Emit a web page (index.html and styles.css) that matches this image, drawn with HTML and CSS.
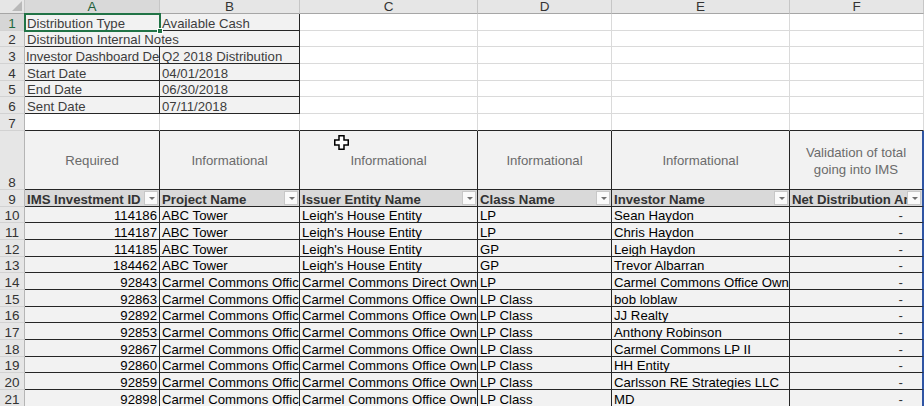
FILE: index.html
```html
<!DOCTYPE html>
<html>
<head>
<meta charset="utf-8">
<link rel="stylesheet" href="styles.css">
</head>
<body>
<div class="sheet">
  <div class="row top">
    <div class="c corner"><svg class="tri" width="10" height="10" viewBox="0 0 10 10"><polygon points="0,10 10,0 10,10" fill="#b9b9b9"/></svg></div>
    <div class="c ch selc">A</div>
    <div class="c ch">B</div>
    <div class="c ch">C</div>
    <div class="c ch">D</div>
    <div class="c ch">E</div>
    <div class="c ch">F</div>
  </div>

  <div class="row">
    <div class="c rh selr">1</div>
    <div class="c f t1">Distribution Type</div>
    <div class="c f t1">Available Cash</div>
    <div class="c"></div><div class="c"></div><div class="c"></div><div class="c"></div>
  </div>
  <div class="row s">
    <div class="c rh">2</div>
    <div class="c f t1 span2">Distribution Internal Notes</div>
    <div class="c"></div><div class="c"></div><div class="c"></div><div class="c"></div>
  </div>
  <div class="row">
    <div class="c rh">3</div>
    <div class="c f t1 tight">Investor Dashboard De</div>
    <div class="c f t1">Q2 2018 Distribution</div>
    <div class="c"></div><div class="c"></div><div class="c"></div><div class="c"></div>
  </div>
  <div class="row">
    <div class="c rh">4</div>
    <div class="c f t1">Start Date</div>
    <div class="c f t1">04/01/2018</div>
    <div class="c"></div><div class="c"></div><div class="c"></div><div class="c"></div>
  </div>
  <div class="row s">
    <div class="c rh">5</div>
    <div class="c f t1">End Date</div>
    <div class="c f t1">06/30/2018</div>
    <div class="c"></div><div class="c"></div><div class="c"></div><div class="c"></div>
  </div>
  <div class="row">
    <div class="c rh">6</div>
    <div class="c f t1">Sent Date</div>
    <div class="c f t1">07/11/2018</div>
    <div class="c"></div><div class="c"></div><div class="c"></div><div class="c"></div>
  </div>
  <div class="row">
    <div class="c rh">7</div>
    <div class="c bb"></div><div class="c bb"></div><div class="c bb"></div><div class="c bb"></div><div class="c bb"></div><div class="c bb"></div>
  </div>

  <div class="row tall">
    <div class="c rh">8</div>
    <div class="c f lab">Required</div>
    <div class="c f lab">Informational</div>
    <div class="c f lab">Informational</div>
    <div class="c f lab">Informational</div>
    <div class="c f lab">Informational</div>
    <div class="c f lab blue">Validation of total<br>going into IMS</div>
  </div>

  <div class="row">
    <div class="c rh">9</div>
    <div class="c f hd">IMS Investment ID<span class="fb"></span></div>
    <div class="c f hd">Project Name<span class="fb"></span></div>
    <div class="c f hd">Issuer Entity Name<span class="fb"></span></div>
    <div class="c f hd">Class Name<span class="fb"></span></div>
    <div class="c f hd">Investor Name<span class="fb"></span></div>
    <div class="c f hd blue">Net Distribution An<span class="fb"></span></div>
  </div>

  <div class="row s">
    <div class="c rh">10</div>
    <div class="c f r">114186</div>
    <div class="c f">ABC Tower</div>
    <div class="c f">Leigh's House Entity</div>
    <div class="c f">LP</div>
    <div class="c f">Sean Haydon</div>
    <div class="c f dash blue">-</div>
  </div>
  <div class="row">
    <div class="c rh">11</div>
    <div class="c f r">114187</div>
    <div class="c f">ABC Tower</div>
    <div class="c f">Leigh's House Entity</div>
    <div class="c f">LP</div>
    <div class="c f">Chris Haydon</div>
    <div class="c f dash blue">-</div>
  </div>
  <div class="row">
    <div class="c rh">12</div>
    <div class="c f r">114185</div>
    <div class="c f">ABC Tower</div>
    <div class="c f">Leigh's House Entity</div>
    <div class="c f">GP</div>
    <div class="c f">Leigh Haydon</div>
    <div class="c f dash blue">-</div>
  </div>
  <div class="row s">
    <div class="c rh">13</div>
    <div class="c f r">184462</div>
    <div class="c f">ABC Tower</div>
    <div class="c f">Leigh's House Entity</div>
    <div class="c f">GP</div>
    <div class="c f">Trevor Albarran</div>
    <div class="c f dash blue">-</div>
  </div>
  <div class="row">
    <div class="c rh">14</div>
    <div class="c f r">92843</div>
    <div class="c f">Carmel Commons Offic</div>
    <div class="c f">Carmel Commons Direct Own</div>
    <div class="c f">LP</div>
    <div class="c f">Carmel Commons Office Own</div>
    <div class="c f dash blue">-</div>
  </div>
  <div class="row">
    <div class="c rh">15</div>
    <div class="c f r">92863</div>
    <div class="c f">Carmel Commons Offic</div>
    <div class="c f">Carmel Commons Office Own</div>
    <div class="c f">LP Class</div>
    <div class="c f">bob loblaw</div>
    <div class="c f dash blue">-</div>
  </div>
  <div class="row s">
    <div class="c rh">16</div>
    <div class="c f r">92892</div>
    <div class="c f">Carmel Commons Offic</div>
    <div class="c f">Carmel Commons Office Own</div>
    <div class="c f">LP Class</div>
    <div class="c f">JJ Realty</div>
    <div class="c f dash blue">-</div>
  </div>
  <div class="row">
    <div class="c rh">17</div>
    <div class="c f r">92853</div>
    <div class="c f">Carmel Commons Offic</div>
    <div class="c f">Carmel Commons Office Own</div>
    <div class="c f">LP Class</div>
    <div class="c f">Anthony Robinson</div>
    <div class="c f dash blue">-</div>
  </div>
  <div class="row">
    <div class="c rh">18</div>
    <div class="c f r">92867</div>
    <div class="c f">Carmel Commons Offic</div>
    <div class="c f">Carmel Commons Office Own</div>
    <div class="c f">LP Class</div>
    <div class="c f">Carmel Commons LP II</div>
    <div class="c f dash blue">-</div>
  </div>
  <div class="row s">
    <div class="c rh">19</div>
    <div class="c f r">92860</div>
    <div class="c f">Carmel Commons Offic</div>
    <div class="c f">Carmel Commons Office Own</div>
    <div class="c f">LP Class</div>
    <div class="c f">HH Entity</div>
    <div class="c f dash blue">-</div>
  </div>
  <div class="row">
    <div class="c rh">20</div>
    <div class="c f r">92859</div>
    <div class="c f">Carmel Commons Offic</div>
    <div class="c f">Carmel Commons Office Own</div>
    <div class="c f">LP Class</div>
    <div class="c f">Carlsson RE Strategies LLC</div>
    <div class="c f dash blue">-</div>
  </div>
  <div class="row">
    <div class="c rh">21</div>
    <div class="c f r">92898</div>
    <div class="c f">Carmel Commons Offic</div>
    <div class="c f">Carmel Commons Office Own</div>
    <div class="c f">LP Class</div>
    <div class="c f">MD</div>
    <div class="c f dash blue">-</div>
  </div>

  <div class="selbox"><span class="handle"></span></div>
  <svg class="cursor" width="15" height="15" viewBox="0 0 15 15"><polygon points="5,0.75 10,0.75 10,5 14.25,5 14.25,10 10,10 10,14.25 5,14.25 5,10 0.75,10 0.75,5 5,5" fill="#fff" stroke="#000" stroke-width="1.5"/></svg>
</div>
</body>
</html>
```

FILE: styles.css
```css
* { box-sizing: border-box; margin: 0; padding: 0; }
html, body { background: #fff; overflow: hidden; }
body {
  width: 924px;
  height: 406px;
  font-family: "Liberation Sans", Arial, sans-serif;
  font-size: 13.2px;
  color: #000;
}
.sheet {
  position: relative;
  display: flex;
  flex-direction: column;
}
.row {
  display: grid;
  grid-template-columns: 25px 135px 140px 178px 134px 178px 134px;
  height: 17px;
}
.row.s { height: 16px; }
.row.top { height: 14px; }
.row.tall { height: 59px; }

.c {
  position: relative;
  display: flex;
  align-items: flex-end;
  overflow: hidden;
  white-space: nowrap;
  padding: 0 2px;
  line-height: 13px;
  border-right: 1px solid #dadada;
  border-bottom: 1px solid #dadada;
}
.span2 { grid-column: span 2; }
.tight { letter-spacing: -0.12px; padding-left: 1px; }

.corner { background: #e6e6e6; border-right-color: #c6c6c6; border-bottom-color: #a6a6a6; }
.tri { position: absolute; right: 2px; bottom: 2px; }
.ch {
  background: #e6e6e6;
  border-right-color: #c6c6c6;
  border-bottom-color: #a6a6a6;
  justify-content: center;
  align-items: center;
  line-height: 13px;
  color: #333;
  font-size: 13.5px;
}
.selc { background: #d9d9d9; color: #1f5f3a; border-bottom-color: #7fa58d; }
.rh {
  background: #e6e6e6;
  border-right-color: #b5b5b5;
  border-bottom-color: #d2d2d2;
  justify-content: center;
  color: #333;
  padding: 0;
  font-size: 13.5px;
}
.selr { background: #d6d6d6; color: #1f6b40; }

.f { background: #f2f2f2; border-right-color: #262626; border-bottom-color: #262626; }
.t1 { color: #3d3d3d; }
.bb { border-bottom-color: #262626; }
.r { justify-content: flex-end; }
.lab {
  color: #6b6b6b;
  align-items: center;
  justify-content: center;
  text-align: center;
  white-space: normal;
  line-height: 17px;
  padding-top: 1px;
}
.hd { background: #d9d9d9; font-weight: bold; color: #333; }
.dash { justify-content: flex-end; padding-right: 19px; color: #333; }
.blue { border-right: 2px solid #2f55a4; }

.fb {
  position: absolute;
  right: 1px;
  top: 1px;
  width: 14px;
  height: 14px;
  background: #fafafa;
  border: 1px solid #c8c8c8;
}
.fb::after {
  content: "";
  position: absolute;
  left: 4px;
  top: 5px;
  border-left: 3px solid transparent;
  border-right: 3px solid transparent;
  border-top: 3px solid #707070;
}

.selbox {
  position: absolute;
  left: 24px;
  top: 13px;
  width: 137px;
  height: 19px;
  border: 2px solid #217346;
}
.handle {
  position: absolute;
  right: -4px;
  bottom: -4px;
  width: 6px;
  height: 6px;
  background: #217346;
  border: 1px solid #fff;
}
.cursor { position: absolute; left: 334px; top: 135px; }
```
